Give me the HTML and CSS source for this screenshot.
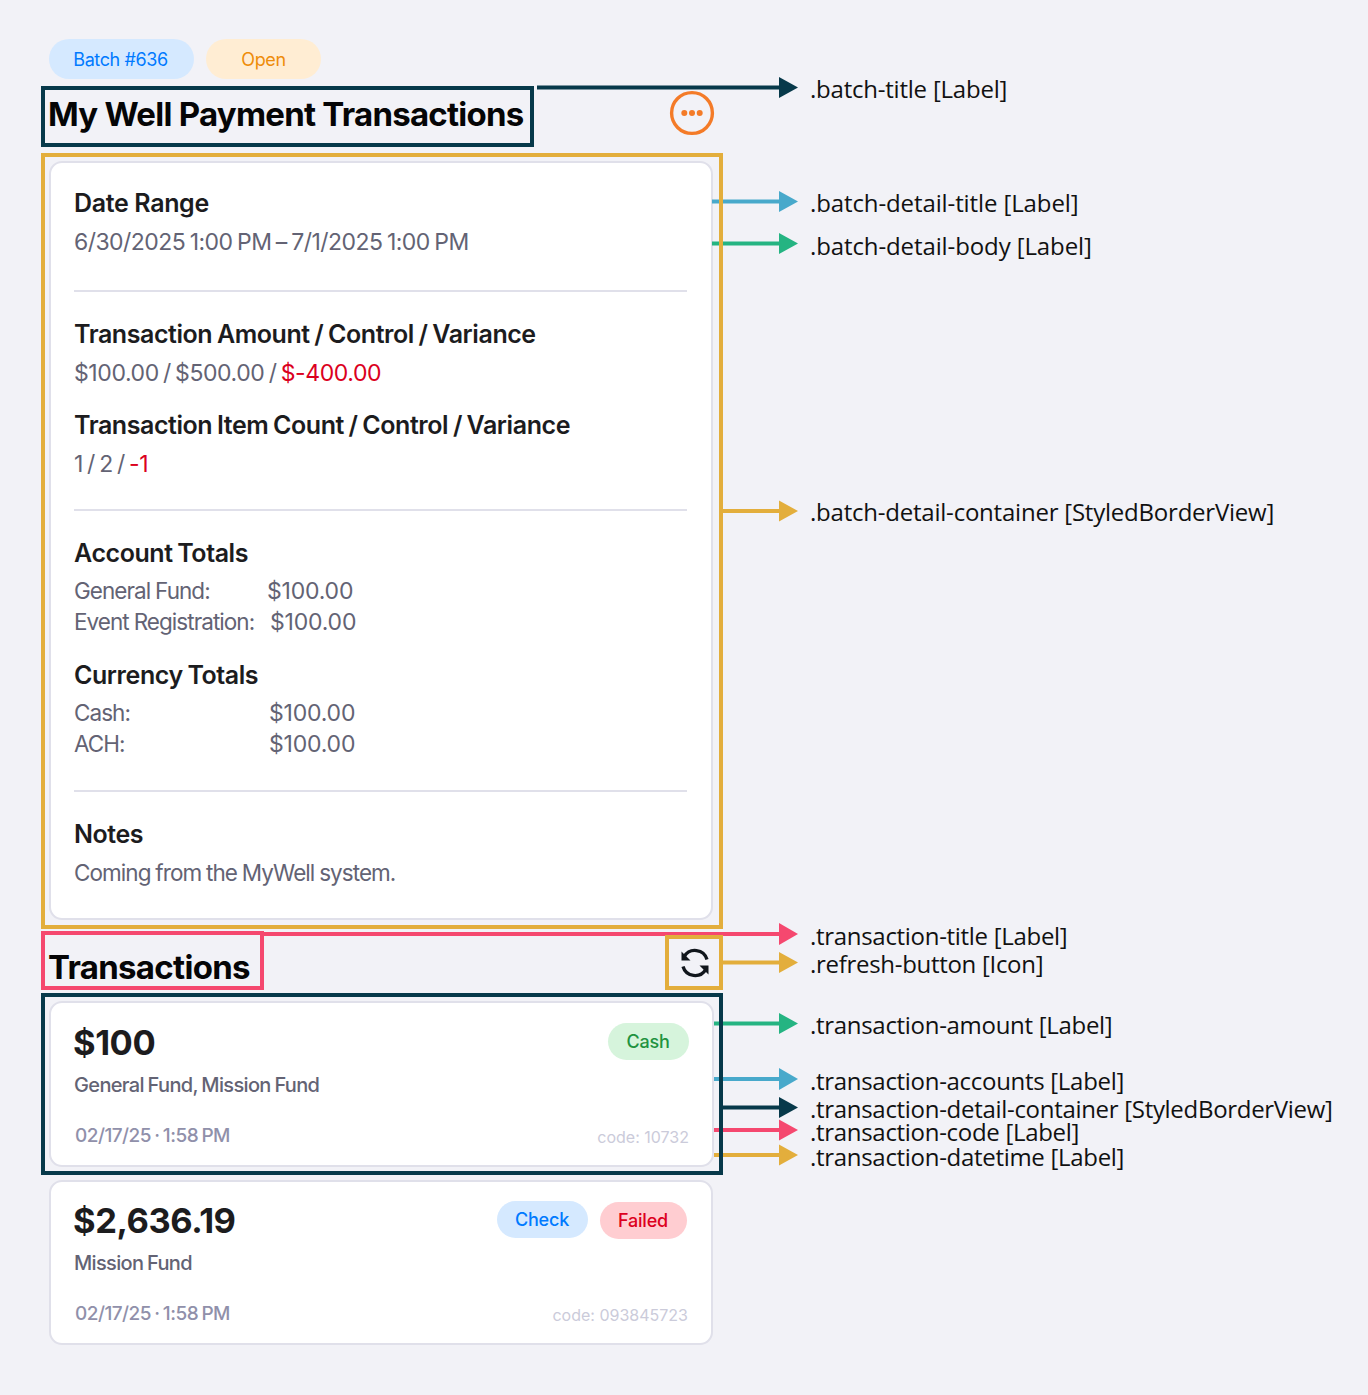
FILE: index.html
```html
<!DOCTYPE html>
<html lang="en">
<head>
<meta charset="utf-8">
<title>Batch details annotated</title>
<link rel="stylesheet" href="styles.css">
</head>
<body>
<div class="page">
  <main class="screen">
    <div class="pills">
      <span class="pill pill-blue pill-batch">Batch #636</span>
      <span class="pill pill-orange pill-open">Open</span>
    </div>
    <header class="title-row">
      <h1 class="page-title title-main">My Well Payment Transactions</h1>
      <svg class="more-icon" width="46" height="46" viewBox="0 0 46 46" aria-hidden="true">
        <circle cx="23" cy="23" r="20.4" fill="none" stroke="#f47b28" stroke-width="3.4"/>
        <circle cx="15.3" cy="23" r="3" fill="#f47b28"/>
        <circle cx="23" cy="23" r="3" fill="#f47b28"/>
        <circle cx="30.7" cy="23" r="3" fill="#f47b28"/>
      </svg>
    </header>
    <section class="card detail-card">
      <div class="detail-section section-date">
        <h2 class="detail-title title-single">Date Range</h2>
        <p class="detail-body body-date">6/30/2025 1:00 PM – 7/1/2025 1:00 PM</p>
      </div>
      <hr class="divider">
      <div class="detail-section section-amount">
        <h2 class="detail-title">Transaction Amount / Control / Variance</h2>
        <p class="detail-body">$100.00 / $500.00 / <span class="negative">$-400.00</span></p>
        <h2 class="detail-title title-spaced">Transaction Item Count / Control / Variance</h2>
        <p class="detail-body">1 / 2 / <span class="negative">-1</span></p>
      </div>
      <hr class="divider">
      <div class="detail-section section-totals">
        <h2 class="detail-title">Account Totals</h2>
        <div class="total-rows">
          <p class="detail-body total-row"><span class="total-label label-general">General Fund:</span><span class="total-value">$100.00</span></p>
          <p class="detail-body total-row"><span class="total-label label-event">Event Registration:</span><span class="total-value">$100.00</span></p>
        </div>
        <h2 class="detail-title title-spaced">Currency Totals</h2>
        <div class="total-rows">
          <p class="detail-body total-row"><span class="total-label label-currency">Cash:</span><span class="total-value">$100.00</span></p>
          <p class="detail-body total-row"><span class="total-label label-currency">ACH:</span><span class="total-value">$100.00</span></p>
        </div>
      </div>
      <hr class="divider">
      <div class="detail-section section-notes">
        <h2 class="detail-title">Notes</h2>
        <p class="detail-body body-words">Coming from the MyWell system.</p>
      </div>
    </section>
    <header class="title-row transactions-row">
      <h1 class="page-title title-tx">Transactions</h1>
      <svg class="refresh-icon" width="32" height="32" viewBox="0 0 32 32" aria-hidden="true">
        <path d="M28 12.500A12.500 12.500 0 0 0 5.200 9.700M4 19.500A12.500 12.500 0 0 0 26.800 22.300" fill="none" stroke="#11161c" stroke-width="3.300"/>
        <path d="M2.500 4.500V13.500H11.500ZM29.500 27.500V18.500H20.500Z" fill="#11161c"/>
      </svg>
    </header>
    <article class="card tx-card">
      <div class="tx-top">
        <span class="tx-amount">$100</span>
        <span class="pill pill-green pill-tx pill-cash">Cash</span>
      </div>
      <p class="tx-accounts">General Fund, Mission Fund</p>
      <div class="tx-bottom">
        <span class="tx-date">02/17/25 · 1:58 PM</span>
        <span class="tx-code">code: 10732</span>
      </div>
    </article>
    <article class="card tx-card tx-card-second">
      <div class="tx-top">
        <span class="tx-amount">$2,636.19</span>
        <span class="tx-pills">
          <span class="pill pill-blue pill-tx pill-check">Check</span>
          <span class="pill pill-red pill-tx pill-failed">Failed</span>
        </span>
      </div>
      <p class="tx-accounts">Mission Fund</p>
      <div class="tx-bottom">
        <span class="tx-date">02/17/25 · 1:58 PM</span>
        <span class="tx-code">code: 093845723</span>
      </div>
    </article>
  </main>

  <svg class="overlay" width="1368" height="1395" viewBox="0 0 1368 1395" aria-hidden="true">
    <g stroke-width="4" fill="none">
      <path stroke="#07394a" d="M537 87.500H780"/>
      <path stroke="#48a9cb" d="M712 201.500H780"/>
      <path stroke="#25b482" d="M712 243.500H780"/>
      <path stroke="#e3ae3c" d="M721 511H780"/>
      <path stroke="#f5486f" d="M262 934H780"/>
      <path stroke="#e3ae3c" d="M721 962.500H780"/>
      <path stroke="#25b482" d="M714 1023.500H780"/>
      <path stroke="#48a9cb" d="M714 1079H780"/>
      <path stroke="#07394a" d="M721 1107.500H780"/>
      <path stroke="#f5486f" d="M714 1130H780"/>
      <path stroke="#e3ae3c" d="M714 1155H780"/>
    </g>
    <g>
      <path fill="#07394a" d="M779 77L798 87.500L779 98Z"/>
      <path fill="#48a9cb" d="M779 191L798 201.500L779 212Z"/>
      <path fill="#25b482" d="M779 233L798 243.500L779 254Z"/>
      <path fill="#e3ae3c" d="M779 500.500L798 511L779 521.500Z"/>
      <path fill="#f5486f" d="M779 923L798 934L779 945Z"/>
      <path fill="#e3ae3c" d="M779 952L798 962.500L779 973Z"/>
      <path fill="#25b482" d="M779 1013L798 1023.500L779 1034Z"/>
      <path fill="#48a9cb" d="M779 1068L798 1079L779 1090Z"/>
      <path fill="#07394a" d="M779 1097L798 1107.500L779 1118Z"/>
      <path fill="#f5486f" d="M779 1119.500L798 1130L779 1140.500Z"/>
      <path fill="#e3ae3c" d="M779 1144.500L798 1155L779 1165.500Z"/>
    </g>
    <g fill="none" stroke-width="4">
      <rect x="43" y="88" width="489" height="57" stroke="#07394a"/>
      <rect x="43" y="155" width="678" height="772" stroke="#e3ae3c"/>
      <rect x="43" y="933" width="219" height="55" stroke="#f5486f"/>
      <rect x="667" y="937" width="54" height="51" stroke="#e3ae3c"/>
      <rect x="43" y="995" width="678" height="178" stroke="#07394a"/>
    </g>
  </svg>

  <span class="note note-1">.batch-title [Label]</span>
  <span class="note note-2">.batch-detail-title [Label]</span>
  <span class="note note-3">.batch-detail-body [Label]</span>
  <span class="note note-4">.batch-detail-container [StyledBorderView]</span>
  <span class="note note-5">.transaction-title [Label]</span>
  <span class="note note-6">.refresh-button [Icon]</span>
  <span class="note note-7">.transaction-amount [Label]</span>
  <span class="note note-8">.transaction-accounts [Label]</span>
  <span class="note note-9">.transaction-detail-container [StyledBorderView]</span>
  <span class="note note-10">.transaction-code [Label]</span>
  <span class="note note-11">.transaction-datetime [Label]</span>
</div>
</body>
</html>
```

FILE: styles.css
```css
* { box-sizing: border-box; }
html, body { margin: 0; padding: 0; }
body { background: #f2f2f7; font-family: Inter, "Liberation Sans", sans-serif; }
h1, h2, p { margin: 0; font: inherit; }

.page { position: relative; width: 1368px; height: 1395px; overflow: hidden; }
.screen { width: 665px; margin-left: 49px; padding-top: 39px; display: flex; flex-direction: column; }

.pills { display: flex; gap: 12px; height: 40px; }
.pill { display: inline-flex; align-items: center; justify-content: center; border-radius: 999px; }
.pill-batch { width: 145px; padding-right: 2px; font-size: 18px; letter-spacing: -0.4px; }
.pill-open { width: 115px; font-size: 18px; letter-spacing: -0.4px; }
.pill-blue { background: #d5e9ff; color: #007aff; }
.pill-orange { background: #ffedd3; color: #ee8c0a; }
.pill-green { background: #d6f4dc; color: #21923f; }
.pill-red { background: #ffcdd1; color: #dd0020; }

.title-row { display: flex; justify-content: space-between; align-items: center; height: 70px; }
.page-title { font-size: 33px; line-height: 40px; font-weight: 700; color: #050506; margin-left: -1px; }
.title-main { letter-spacing: -0.75px; }
.title-tx { letter-spacing: -0.7px; }
.more-icon { margin: -2px -1px 0 0; }

.card { background: #fff; border: 2px solid #e0e0ea; border-radius: 13px; }
.detail-card { width: 664px; height: 759px; margin-top: 12px; padding: 0 23px; }
.detail-section { display: flex; flex-direction: column; }
.section-date { height: 127px; padding-top: 25px; }
.section-amount { height: 217px; padding-top: 27px; }
.section-totals { height: 279px; padding-top: 27px; }
.section-notes { padding-top: 27px; }
.detail-title { font-size: 25px; line-height: 30px; font-weight: 600; color: #1c1c1e; letter-spacing: -0.43px; word-spacing: -1.2px; }
.title-single { letter-spacing: -0.35px; word-spacing: 0; }
.title-spaced { margin-top: 21px; }
.section-totals .title-spaced { margin-top: 23px; }
.detail-body { font-size: 23px; line-height: 31px; color: #636374; margin-top: 9px; letter-spacing: -0.4px; word-spacing: -1.9px; }
.body-date { letter-spacing: -0.55px; word-spacing: -1.4px; }
.body-words, .total-label { font-size: 22.5px; letter-spacing: -0.95px; word-spacing: -0.5px; }
.body-words { margin-top: 8px; }
.total-value { letter-spacing: -0.2px; }
.negative { color: #db0020; }
.divider { height: 2px; border: 0; margin: 0 1px 0 0; background: #e0e0ea; }
.total-rows { margin-top: 7px; }
.total-row { margin-top: 0; height: 31px; display: flex; align-items: baseline; }
.total-label { display: block; }
.label-general { width: 193px; }
.label-event { width: 196px; }
.label-currency { width: 195px; }

.transactions-row { height: 81px; align-items: flex-end; padding-bottom: 14px; }
.refresh-icon { margin: 0 3px 8px 0; }

.tx-card { height: 166px; padding: 21px 23px 0; display: flex; flex-direction: column; }
.tx-card-second { width: 664px; height: 165px; margin-top: 13px; padding-top: 20px; }
.tx-top { display: flex; justify-content: space-between; align-items: center; height: 37px; }
.tx-amount { font-size: 34.5px; line-height: 38px; font-weight: 700; color: #1c1c1e; letter-spacing: -0.45px; margin-left: -1px; }
.tx-pills { display: flex; gap: 12px; align-items: flex-start; }
.pill-tx { height: 37px; padding-right: 1px; font-size: 18px; font-weight: 500; letter-spacing: -0.2px; width: 81px; }
.pill-cash { margin-top: -2px; }
.pill-check { width: 91px; margin-top: -1px; }
.pill-failed { width: 87px; margin-right: 1px; }
.tx-accounts { font-size: 20px; line-height: 26px; font-weight: 500; color: #636374; margin-top: 11px; letter-spacing: -0.66px; word-spacing: -1px; }
.tx-bottom { display: flex; justify-content: space-between; align-items: flex-end; margin-top: 25px; }
.tx-date { font-size: 19px; line-height: 25px; font-weight: 500; color: #9090aa; margin-left: 1px; letter-spacing: -0.53px; word-spacing: -1.2px; }
.tx-code { font-size: 16px; line-height: 22px; color: #cbcbda; }

.overlay { position: absolute; left: 0; top: 0; pointer-events: none; }
.note { position: absolute; left: 810px; font-family: "Open Sans", "Noto Sans", sans-serif; font-size: 24px; line-height: 22px; letter-spacing: -0.22px; color: #111; white-space: nowrap; }
.note-2, .note-3 { letter-spacing: -0.11px; }
.note-5, .note-6, .note-7, .note-8, .note-9, .note-10, .note-11 { letter-spacing: -0.3px; }
.note-1 { top: 78px; }
.note-2 { top: 192px; }
.note-3 { top: 235px; }
.note-4 { top: 501px; }
.note-5 { top: 925px; }
.note-6 { top: 953px; }
.note-7 { top: 1014px; }
.note-8 { top: 1070px; }
.note-9 { top: 1098px; }
.note-10 { top: 1121px; }
.note-11 { top: 1146px; }
```
